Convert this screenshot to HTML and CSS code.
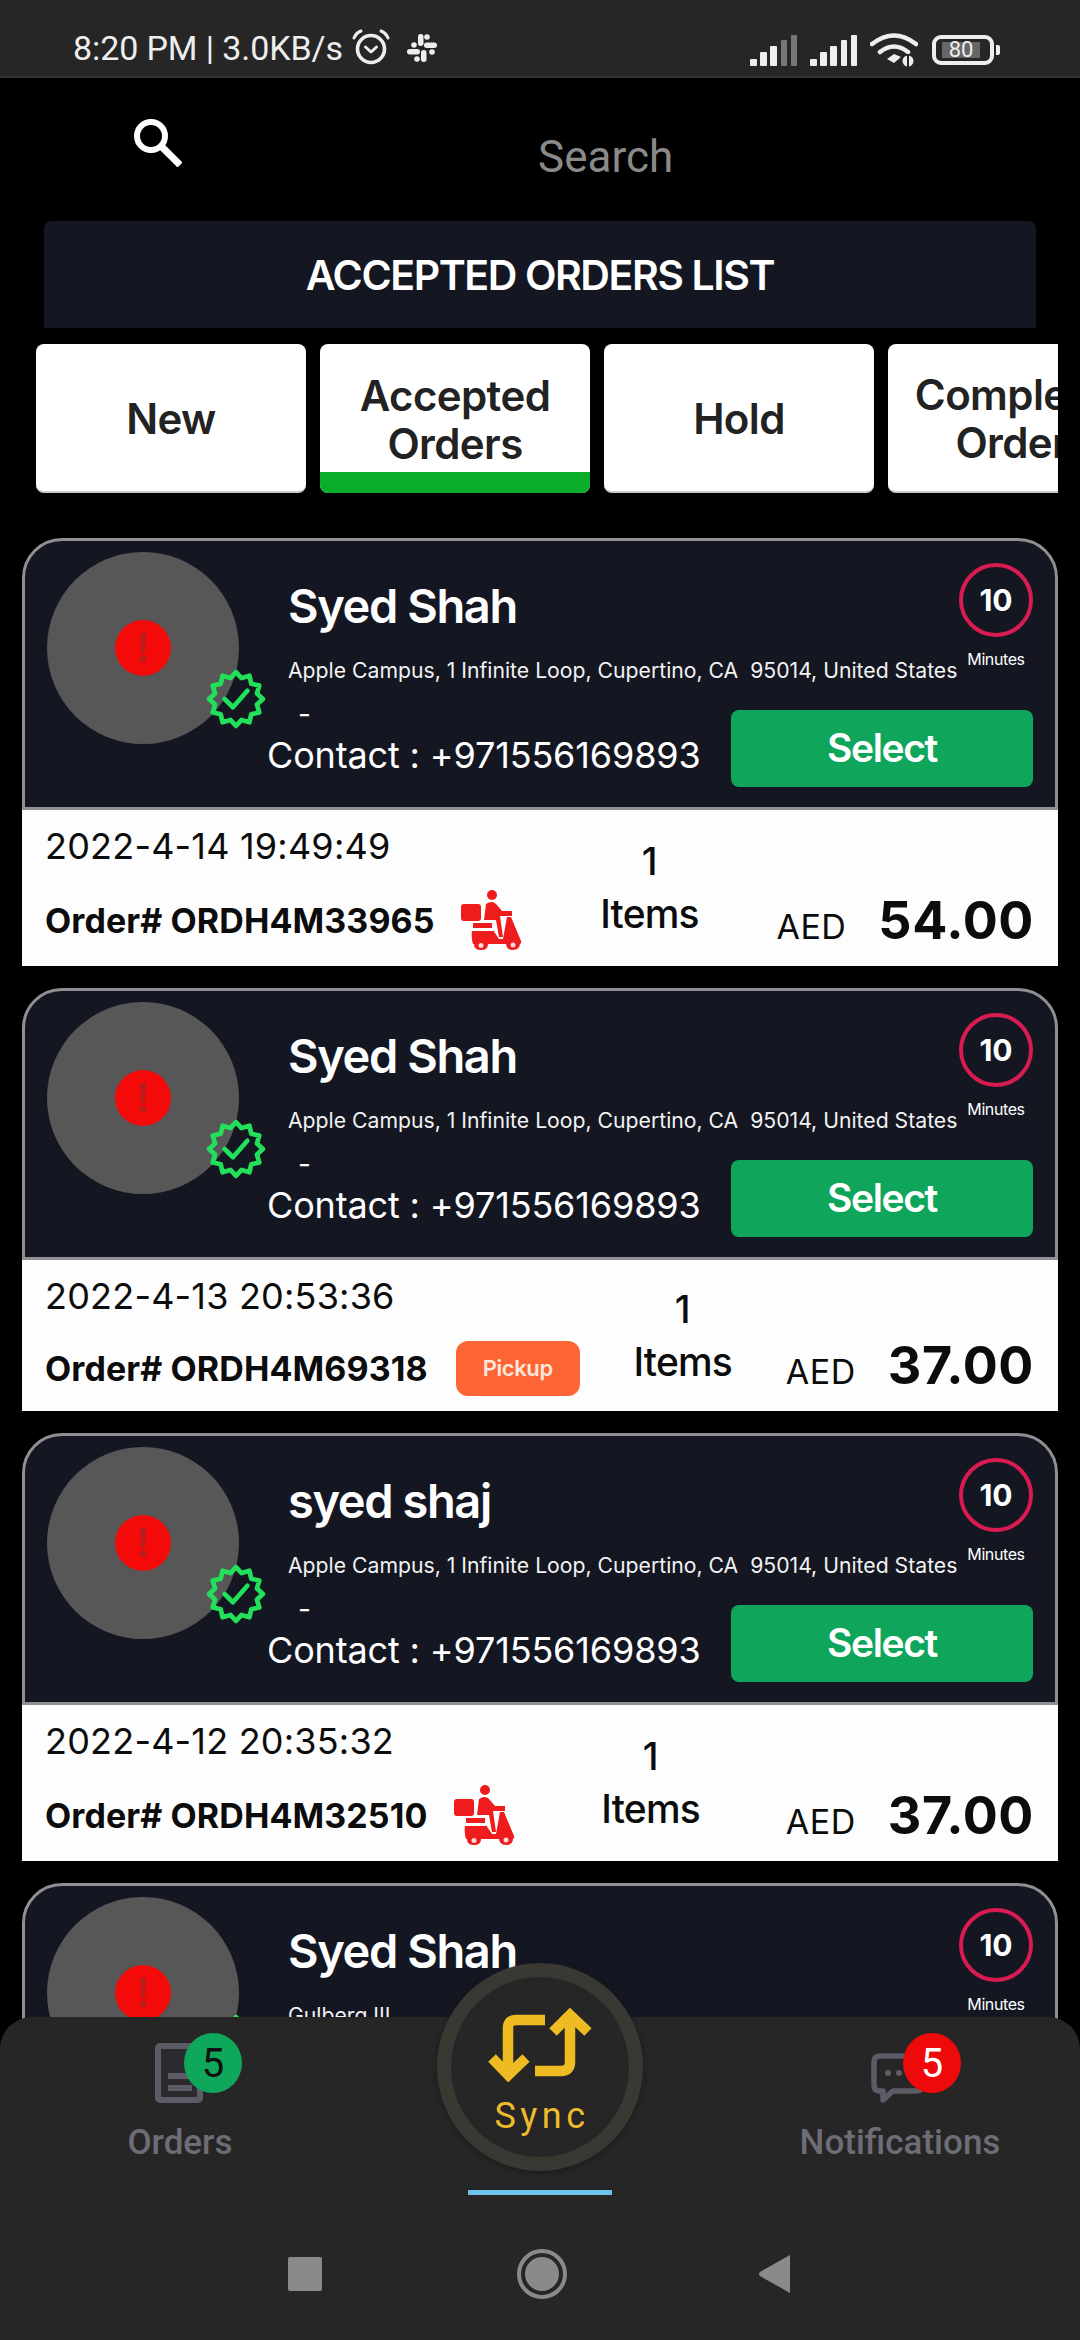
FILE: index.html
```html
<!DOCTYPE html>
<html lang="en">
<head>
<meta charset="utf-8">
<title>Accepted Orders</title>
<link rel="stylesheet" href="styles.css">
</head>
<body>
<svg class="defs" width="0" height="0" aria-hidden="true">
  <symbol id="verified" viewBox="-30 -30 60 60">
    <polygon points="26,0 20.3,5.4 22.5,13 14.8,14.8 13,22.5 5.4,20.3 0,26 -5.4,20.3 -13,22.5 -14.8,14.8 -22.5,13 -20.3,5.4 -26,0 -20.3,-5.4 -22.5,-13 -14.8,-14.8 -13,-22.5 -5.4,-20.3 0,-26 5.4,-20.3 13,-22.5 14.8,-14.8 22.5,-13 20.3,-5.4" fill="none" stroke="#22e05a" stroke-width="4.600" stroke-linejoin="round"/>
    <polyline points="-11,0 -3,8 11,-8" fill="none" stroke="#22e05a" stroke-width="4.500" stroke-linecap="round" stroke-linejoin="round"/>
  </symbol>
  <symbol id="alert" viewBox="0 0 56 56">
    <circle cx="28" cy="28" r="28" fill="#f50a0a"/>
    <path d="M25 13h6l-1 20h-4z" fill="#b81c1c"/>
    <circle cx="28" cy="39" r="3.400" fill="#b81c1c"/>
  </symbol>
  <symbol id="rider" viewBox="0 0 62 60">
    <circle cx="31" cy="5" r="5" fill="#ee1c1c"/>
    <rect x="0" y="14" width="20" height="17" rx="3" fill="#ee1c1c"/>
    <path d="M25 14q6-4 10 0l6 7h10v5H39l3 21h-4l-3-17H23z" fill="#ee1c1c"/>
    <rect x="12" y="33" width="19" height="5" fill="#ee1c1c"/>
    <path d="M11 41h21v-1l6 9h4l4-22h4l10 24q1 3-2 3H12q-2-6-1-13z" fill="#ee1c1c"/>
    <path d="M13 54h14q0 6-7 6t-7-6zM45 53h14q0 7-7 7t-7-7z" fill="#ee1c1c"/>
    <circle cx="20" cy="55.500" r="2.500" fill="#f8d8d8"/>
    <circle cx="52" cy="55" r="2.500" fill="#f8d8d8"/>
  </symbol>
</svg>

<div class="screen">
  <header class="status">
    <div class="status-left">
      <span class="status-text">8:20 PM | 3.0KB/s</span>
      <svg class="alarm" viewBox="0 0 38 38">
        <circle cx="19" cy="21" r="13.500" fill="none" stroke="#eee" stroke-width="3.600"/>
        <path d="M13.500 19l5.500 5 5.500-5" fill="none" stroke="#eee" stroke-width="3" stroke-linecap="round" stroke-linejoin="round"/>
        <path d="M2 10q2-5 7-7M36 10q-2-5-7-7" fill="none" stroke="#eee" stroke-width="3" stroke-linecap="round"/>
      </svg>
      <svg class="slack" viewBox="0 0 30 30" fill="#eee">
        <rect x="11" y="1" width="5.500" height="12" rx="2.700"/><circle cx="7" cy="12" r="2.800"/>
        <circle cx="20" cy="4" r="2.800"/><rect x="17" y="9.500" width="13" height="5.500" rx="2.700"/>
        <rect x="0" y="16" width="13" height="5.500" rx="2.700"/><circle cx="10" cy="26" r="2.800"/>
        <circle cx="25" cy="19" r="2.800"/><rect x="14" y="17" width="5.500" height="12" rx="2.700"/>
      </svg>
    </div>
    <div class="status-right">
      <svg class="signal" viewBox="0 0 48 31">
        <rect x="0" y="24" width="7" height="7" rx="1" fill="#eee"/><rect x="10" y="17" width="7" height="14" rx="1" fill="#eee"/><rect x="20" y="11" width="7" height="20" rx="1" fill="#eee"/>
        <rect x="31" y="5" width="6" height="26" rx="1" fill="#777"/><rect x="41" y="0" width="6" height="31" rx="1" fill="#777"/>
      </svg>
      <svg class="signal" viewBox="0 0 48 31">
        <rect x="0" y="24" width="7" height="7" rx="1" fill="#eee"/><rect x="10" y="17" width="7" height="14" rx="1" fill="#eee"/><rect x="20" y="11" width="7" height="20" rx="1" fill="#eee"/>
        <rect x="31" y="5" width="6" height="26" rx="1" fill="#eee"/><rect x="41" y="0" width="6" height="31" rx="1" fill="#eee"/>
      </svg>
      <svg class="wifi" viewBox="0 0 48 34">
        <path d="M2 11q22-17 44 0M10 19q14-11 28 0" fill="none" stroke="#eee" stroke-width="4.500" stroke-linecap="round"/>
        <path d="M17 26l7-5 7 3-7 6z" fill="#eee"/>
        <circle cx="38" cy="28" r="5.500" fill="#eee"/><rect x="37" y="21" width="2" height="13" fill="#262626"/>
      </svg>
      <div class="battery"><span class="battery-level">80</span></div>
      <span class="battery-nub"></span>
    </div>
  </header>

  <div class="search">
    <svg class="search-icon" viewBox="0 0 48 48">
      <circle cx="17" cy="17" r="14" fill="none" stroke="#fff" stroke-width="6"/>
      <path d="M27 27l19 19" stroke="#fff" stroke-width="7"/>
    </svg>
    <span class="search-text">Search</span>
  </div>

  <div class="title-bar">ACCEPTED ORDERS LIST</div>

  <nav class="tabs">
    <div class="tab">New</div>
    <div class="tab tab-active">Accepted<br>Orders</div>
    <div class="tab">Hold</div>
    <div class="tab tab-clipped">Completed<br>Orders</div>
  </nav>

  <main class="list">
    <article class="card">
      <div class="head">
        <div class="avatar"><svg class="alert"><use href="#alert"/></svg><svg class="verified"><use href="#verified"/></svg></div>
        <div class="info">
          <div class="info-top">
            <div class="who">
              <div class="name">Syed Shah</div>
              <div class="address">Apple Campus, 1 Infinite Loop, Cupertino, CA &nbsp;95014, United States</div>
            </div>
            <div class="timer"><div class="timer-ring">10</div><div class="timer-label">Minutes</div></div>
          </div>
          <div class="info-bottom">
            <div class="contact"><div class="dash">-</div><div class="phone">Contact : +971556169893</div></div>
            <div class="select">Select</div>
          </div>
        </div>
      </div>
      <div class="details">
        <div class="order">
          <div class="date">2022-4-14 19:49:49</div>
          <div class="order-row"><span class="order-no">Order# ORDH4M33965</span><svg class="rider"><use href="#rider"/></svg></div>
        </div>
        <div class="items"><span class="items-count">1</span><span class="items-label">Items</span></div>
        <div class="price"><span class="currency">AED</span><span class="amount">54.00</span></div>
      </div>
    </article>

    <article class="card">
      <div class="head">
        <div class="avatar"><svg class="alert"><use href="#alert"/></svg><svg class="verified"><use href="#verified"/></svg></div>
        <div class="info">
          <div class="info-top">
            <div class="who">
              <div class="name">Syed Shah</div>
              <div class="address">Apple Campus, 1 Infinite Loop, Cupertino, CA &nbsp;95014, United States</div>
            </div>
            <div class="timer"><div class="timer-ring">10</div><div class="timer-label">Minutes</div></div>
          </div>
          <div class="info-bottom">
            <div class="contact"><div class="dash">-</div><div class="phone">Contact : +971556169893</div></div>
            <div class="select">Select</div>
          </div>
        </div>
      </div>
      <div class="details details-short">
        <div class="order">
          <div class="date">2022-4-13 20:53:36</div>
          <div class="order-row"><span class="order-no">Order# ORDH4M69318</span><span class="pickup">Pickup</span></div>
        </div>
        <div class="items"><span class="items-count">1</span><span class="items-label">Items</span></div>
        <div class="price"><span class="currency">AED</span><span class="amount">37.00</span></div>
      </div>
    </article>

    <article class="card">
      <div class="head">
        <div class="avatar"><svg class="alert"><use href="#alert"/></svg><svg class="verified"><use href="#verified"/></svg></div>
        <div class="info">
          <div class="info-top">
            <div class="who">
              <div class="name">syed shaj</div>
              <div class="address">Apple Campus, 1 Infinite Loop, Cupertino, CA &nbsp;95014, United States</div>
            </div>
            <div class="timer"><div class="timer-ring">10</div><div class="timer-label">Minutes</div></div>
          </div>
          <div class="info-bottom">
            <div class="contact"><div class="dash">-</div><div class="phone">Contact : +971556169893</div></div>
            <div class="select">Select</div>
          </div>
        </div>
      </div>
      <div class="details">
        <div class="order">
          <div class="date">2022-4-12 20:35:32</div>
          <div class="order-row"><span class="order-no">Order# ORDH4M32510</span><svg class="rider"><use href="#rider"/></svg></div>
        </div>
        <div class="items"><span class="items-count">1</span><span class="items-label">Items</span></div>
        <div class="price"><span class="currency">AED</span><span class="amount">37.00</span></div>
      </div>
    </article>

    <article class="card">
      <div class="head">
        <div class="avatar"><svg class="alert"><use href="#alert"/></svg><svg class="verified"><use href="#verified"/></svg></div>
        <div class="info">
          <div class="info-top">
            <div class="who">
              <div class="name">Syed Shah</div>
              <div class="address">Gulberg III</div>
            </div>
            <div class="timer"><div class="timer-ring">10</div><div class="timer-label">Minutes</div></div>
          </div>
        </div>
      </div>
    </article>
  </main>

  <footer class="bottom">
    <div class="nav-row">
      <div class="nav-item">
        <div class="nav-icon">
          <svg class="orders-icon" viewBox="0 0 48 60">
            <rect x="3" y="3" width="42" height="54" rx="2" fill="#2a2a2f" stroke="#5c5c66" stroke-width="6"/>
            <path d="M13 33h24M13 45h24" stroke="#5c5c66" stroke-width="6"/>
          </svg>
          <span class="badge badge-green">5</span>
        </div>
        <span class="nav-label">Orders</span>
      </div>
      <div class="nav-item nav-sync">
        <div class="sync-ring">
          <svg class="sync-icon" viewBox="0 0 104 74">
            <g fill="none" stroke="#eebb22" stroke-width="10.500">
              <path d="M57 12H28Q20 12 20 20V64"/>
              <path d="M4 50L20.300 67L38 50"/>
              <path d="M47 63H73Q82 63 82 54V9"/>
              <path d="M65 24L82 7L100 24"/>
            </g>
          </svg>
          <span class="sync-label">Sync</span>
        </div>
      </div>
      <div class="nav-item">
        <div class="nav-icon">
          <svg class="notif-icon" viewBox="0 0 54 50">
            <path d="M9 3h36q6 0 6 6v23q0 6-6 6H22L12 47v-9H9q-6 0-6-6V9q0-6 6-6z" fill="none" stroke="#5c5c66" stroke-width="5.500" stroke-linejoin="round"/>
            <circle cx="17" cy="20" r="3" fill="#5c5c66"/><circle cx="28" cy="20" r="3" fill="#5c5c66"/>
          </svg>
          <span class="badge badge-red">5</span>
        </div>
        <span class="nav-label">Notifications</span>
      </div>
    </div>
    <div class="indicator"></div>
    <div class="android">
      <span class="android-square"></span>
      <svg class="android-home" viewBox="0 0 50 50"><circle cx="25" cy="25" r="23" fill="none" stroke="#8a8a8a" stroke-width="4"/><circle cx="25" cy="25" r="17" fill="#8a8a8a"/></svg>
      <svg class="android-back" viewBox="0 0 32 38"><path d="M32 0v38L2 21q-2-2 0-4z" fill="#8a8a8a"/></svg>
    </div>
  </footer>
</div>
</body>
</html>
```

FILE: styles.css
```css
* { box-sizing: border-box; }
html, body { margin: 0; padding: 0; background: #000; }
body { font-family: "Inter", "Liberation Sans", sans-serif; color: #fff; }
.defs { position: absolute; }
.screen { width: 1080px; height: 2340px; position: relative; overflow: hidden; background: #000; }

/* status bar */
.status { height: 78px; background: #262626; border-bottom: 2px solid #323232; display: flex; justify-content: space-between; align-items: flex-start; padding: 28px 80px 0 73px; }
.status-left, .status-right { display: flex; align-items: center; }
.status-text { font-family: "Roboto", sans-serif; font-size: 34px; line-height: 40px; color: #eee; letter-spacing: -.1px; white-space: nowrap; }
.alarm { width: 38px; height: 38px; margin-left: 9px; margin-top: -2px; }
.slack { width: 30px; height: 30px; margin-left: 17px; }
.status-right { gap: 12px; margin-top: 5px; }
.signal { width: 48px; height: 31px; }
.wifi { width: 48px; height: 34px; }
.battery { width: 62px; height: 30px; border: 4px solid #eee; border-radius: 9px; padding: 3px 6px; margin-left: 2px; }
.battery-level { display: block; width: 38px; height: 16px; background: #666; font-family: "Roboto", sans-serif; font-size: 22px; line-height: 16px; text-align: center; color: #eee; }
.battery-nub { width: 4px; height: 10px; background: #eee; border-radius: 0 2px 2px 0; margin-left: -10px; }

/* search */
.search { height: 143px; display: flex; align-items: center; padding-left: 134px; }
.search-icon { width: 48px; height: 48px; margin-top: -14px; }
.search-text { font-family: "Roboto", sans-serif; font-size: 44px; color: #8a8a8a; margin-left: 356px; margin-top: 14px; }

/* title */
.title-bar { height: 107px; margin: 0 44px; background: #141722; border-radius: 8px 8px 0 0; display: flex; align-items: center; justify-content: center; font-size: 41px; font-weight: 600; letter-spacing: -1.400px; color: #fff; }

/* tabs */
.tabs { display: flex; gap: 14px; margin: 16px 22px 0 36px; overflow: hidden; height: 149px; }
.tab { flex: none; width: 270px; height: 149px; background: #fff; border-radius: 8px; color: #222; font-size: 42px; font-weight: 600; letter-spacing: -.6px; line-height: 48px; display: flex; align-items: center; justify-content: center; text-align: center; position: relative; border-bottom: 2px solid #ccc; padding-top: 2px; }
.tab-active { border-bottom: none; padding-top: 2px; }
.tab-active::after { content: ""; position: absolute; left: 0; right: 0; bottom: 0; height: 21px; background: #09ad2a; border-radius: 0 0 8px 8px; }

/* list */
.list { display: flex; flex-direction: column; gap: 22px; margin: 45px 22px 0; }
.card { flex: none; }
.head { height: 272px; background: #141722; border: 3px solid #8f8f94; border-radius: 40px 40px 0 0; display: flex; padding: 11px 22px 0; }
.avatar { width: 192px; height: 192px; border-radius: 50%; background: #575757; position: relative; flex: none; display: flex; align-items: center; justify-content: center; }
.alert { width: 56px; height: 56px; }
.verified { position: absolute; left: 158px; top: 116px; width: 62px; height: 62px; }
.info { flex: 1; margin-left: 28px; padding-top: 11px; min-width: 0; }
.info-top { height: 147px; display: flex; justify-content: space-between; }
.who { padding-left: 21px; }
.name { font-size: 47px; font-weight: 600; line-height: 60px; letter-spacing: -1.400px; margin-top: 13px; white-space: nowrap; }
.address { font-size: 21.200px; line-height: 30px; margin-top: 19px; white-space: nowrap; color: #f2f2f2; }
.timer { width: 74px; flex: none; display: flex; flex-direction: column; align-items: center; }
.timer-ring { width: 74px; height: 74px; flex: none; border: 4px solid #d81b50; border-radius: 50%; display: flex; align-items: center; justify-content: center; font-size: 30px; font-weight: 700; }
.timer-label { font-size: 16px; line-height: 20px; margin-top: 12px; letter-spacing: -.4px; white-space: nowrap; }
.info-bottom { display: flex; justify-content: space-between; height: 77px; }
.contact { margin-top: -10px; }
.dash { font-size: 28px; line-height: 28px; padding-left: 31px; }
.phone { font-size: 36px; font-weight: 400; line-height: 44px; margin-top: 5px; letter-spacing: -.15px; white-space: nowrap; }
.select { width: 302px; height: 77px; background: #0fa55b; border-radius: 8px; display: flex; align-items: center; justify-content: center; font-size: 39px; font-weight: 600; letter-spacing: -1.400px; padding-bottom: 2px; }

.details { height: 156px; background: #fdfdfd; color: #0c0c0c; display: flex; justify-content: space-between; padding: 0 24px 0 23px; }
.details-short { height: 151px; }
.order { display: flex; flex-direction: column; justify-content: space-between; padding: 14px 0 16px; }
.details-short .order { padding-bottom: 13px; }
.date { font-size: 36px; line-height: 44px; letter-spacing: .2px; white-space: nowrap; }
.order-row { display: flex; align-items: center; height: 60px; }
.order-no { font-size: 34px; font-weight: 700; letter-spacing: .1px; white-space: nowrap; }
.rider { width: 62px; height: 60px; margin-left: 26px; }
.pickup { width: 124px; height: 55px; background: #fe6534; border-radius: 12px; margin-left: 28px; color: #f9e6dd; font-size: 22px; font-weight: 600; display: flex; align-items: center; justify-content: center; letter-spacing: -.4px; }
.items { display: flex; flex-direction: column; align-items: center; justify-content: center; }
.items-count { font-size: 38px; font-weight: 500; line-height: 52px; }
.items-label { font-size: 39px; font-weight: 500; line-height: 54px; letter-spacing: -.8px; }
.price { display: flex; align-items: baseline; align-self: flex-end; padding-bottom: 12px; gap: 32px; }
.currency { font-size: 34px; letter-spacing: .5px; }
.amount { font-size: 52px; font-weight: 700; line-height: 66px; letter-spacing: .6px; }

/* bottom navigation */
.bottom { position: absolute; left: 0; right: 0; bottom: 0; height: 323px; background: #262626; border-radius: 32px 32px 0 0; }
.nav-row { display: grid; grid-template-columns: repeat(3, 1fr); height: 173px; }
.nav-item { display: flex; flex-direction: column; align-items: center; padding-top: 16px; }
.nav-icon { height: 86px; width: 110px; position: relative; }
.orders-icon { position: absolute; left: 30px; top: 10px; width: 48px; height: 60px; }
.notif-icon { position: absolute; left: 26px; top: 20px; width: 54px; height: 50px; }
.badge { position: absolute; left: 59px; top: 0; width: 58px; height: 60px; border-radius: 50%; display: flex; align-items: center; justify-content: center; font-family: "Roboto", sans-serif; font-size: 40px; }
.notif-icon + .badge { left: 58px; }
.badge-green { background: #0fa85a; color: #111; }
.badge-red { background: #ee0a0a; color: #fff; }
.nav-label { font-family: "Roboto", sans-serif; font-size: 35px; font-weight: 500; line-height: 44px; color: #6d6d77; margin-top: 2px; white-space: nowrap; }
.nav-sync { padding-top: 0; position: relative; }
.sync-ring { width: 206px; height: 208px; margin-top: -54px; border: 14px solid #3a3833; border-radius: 50%; background: #262626; display: flex; flex-direction: column; align-items: center; box-shadow: 0 2px 6px rgba(0,0,0,.3); padding-top: 31px; }
.sync-icon { width: 104px; height: 74px; flex: none; }
.sync-label { font-family: "Roboto", sans-serif; font-size: 36px; line-height: 40px; color: #eebb2a; letter-spacing: 4.500px; margin-top: 14px; padding-left: 4px; }
.indicator { width: 144px; height: 5px; background: #6fc3ea; margin: 0 auto; }
.android { display: flex; align-items: center; justify-content: center; height: 145px; padding: 12px 3px 0 0; }
.android-square { width: 34px; height: 34px; background: #8a8a8a; border-radius: 2px; }
.android-home { width: 50px; height: 50px; margin-left: 195px; }
.android-back { width: 32px; height: 38px; margin-left: 191px; }
```
